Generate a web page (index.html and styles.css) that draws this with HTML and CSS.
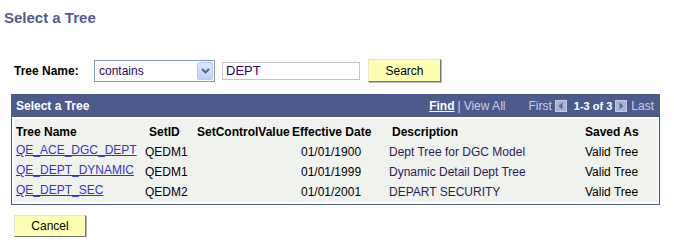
FILE: index.html
```html
<!DOCTYPE html>
<html lang="en">
<head>
<meta charset="UTF-8">
<title>Select a Tree</title>
<link rel="stylesheet" href="styles.css">
</head>
<body>
<div id="page">
	<h1 class="title">Select a Tree</h1>
	<div class="search-row">
		<label class="field-label">Tree Name:</label>
		<div class="select">
			<span class="select-text">contains</span>
			<span class="select-btn">
				<svg width="9" height="6" viewBox="0 0 9 6"><path d="M1 1 L4.5 4.5 L8 1" fill="none" stroke="#4d6185" stroke-width="1.8"/></svg>
			</span>
		</div>
		<div class="input">DEPT</div>
		<button class="btn btn-search">Search</button>
	</div>
	<div class="grid">
		<div class="grid-bar">
			<span class="grid-title">Select a Tree</span>
			<div class="grid-nav">
				<a href="#" class="find">Find</a>
				<span class="sep">|</span>
				<span class="muted">View All</span>
				<span class="muted first">First</span>
				<svg class="arrow" width="12" height="12" viewBox="0 0 12 12"><rect x="0" y="0" width="12" height="12" fill="#a7b3d3"/><rect x="0.5" y="0.5" width="11" height="11" fill="none" stroke="#c3cbe2"/><path d="M7.5 2.5 L3.5 6 L7.5 9.5 Z" fill="#5c6a99"/></svg>
				<b class="count">1-3 of 3</b>
				<svg class="arrow" width="12" height="12" viewBox="0 0 12 12"><rect x="0" y="0" width="12" height="12" fill="#a7b3d3"/><rect x="0.5" y="0.5" width="11" height="11" fill="none" stroke="#c3cbe2"/><path d="M4.5 2.5 L8.5 6 L4.5 9.5 Z" fill="#5c6a99"/></svg>
				<span class="muted last">Last</span>
			</div>
		</div>
		<div class="grid-body">
			<table class="tree-table">
				<colgroup>
					<col style="width: 129px">
					<col style="width: 51px">
					<col style="width: 93px">
					<col style="width: 86px">
					<col style="width: 207px">
					<col>
				</colgroup>
				<tr>
					<th class="c-name">Tree Name</th>
					<th class="c-setid-h">SetID</th>
					<th class="c-scv">SetControlValue</th>
					<th class="c-date-h">Effective Date</th>
					<th class="c-desc-h">Description</th>
					<th class="c-saved">Saved As</th>
				</tr>
				<tr>
					<td class="c-name link-cell"><a href="#">QE_ACE_DGC_DEPT</a></td>
					<td class="c-setid">QEDM1</td>
					<td></td>
					<td class="c-date">01/01/1900</td>
					<td class="c-desc">Dept Tree for DGC Model</td>
					<td class="c-saved">Valid Tree</td>
				</tr>
				<tr>
					<td class="c-name link-cell"><a href="#">QE_DEPT_DYNAMIC</a></td>
					<td class="c-setid">QEDM1</td>
					<td></td>
					<td class="c-date">01/01/1999</td>
					<td class="c-desc">Dynamic Detail Dept Tree</td>
					<td class="c-saved">Valid Tree</td>
				</tr>
				<tr>
					<td class="c-name link-cell"><a href="#">QE_DEPT_SEC</a></td>
					<td class="c-setid">QEDM2</td>
					<td></td>
					<td class="c-date">01/01/2001</td>
					<td class="c-desc">DEPART SECURITY</td>
					<td class="c-saved">Valid Tree</td>
				</tr>
			</table>
		</div>
	</div>
	<button class="btn btn-cancel">Cancel</button>
</div>
</body>
</html>
```

FILE: styles.css
```css
body {
	margin: 0;
	background: #fff;
	font: 12px/14px "Liberation Sans", Arial, sans-serif;
	color: #000;
}
#page {
	padding-top: 9px;
}
.title {
	margin: 0 0 0 4px;
	font: bold 15px/18px "Liberation Sans", Arial, sans-serif;
	color: #515c8f;
}
.search-row {
	display: flex;
	align-items: center;
	height: 23px;
	margin-top: 32px;
	padding-left: 14px;
}
.field-label {
	font-weight: bold;
	width: 80px;
}
.select {
	display: flex;
	align-items: center;
	justify-content: space-between;
	box-sizing: border-box;
	width: 121px;
	height: 22px;
	border: 1px solid #7f9db9;
	padding: 1px 1px 1px 4px;
	color: #330066;
}
.select-btn {
	display: flex;
	align-items: center;
	justify-content: center;
	width: 16px;
	height: 18px;
	box-sizing: border-box;
	border: 1px solid #b9c9ef;
	border-radius: 2px;
	background: linear-gradient(#dfe8fd, #bccdf6);
}
.input {
	box-sizing: border-box;
	width: 138px;
	height: 18px;
	margin-left: 7px;
	padding: 1px 3px;
	border: 1px solid #c5c5c5;
	color: #330066;
	font-size: 13px;
}
.btn {
	box-sizing: border-box;
	height: 23px;
	padding: 0;
	border: 1px solid;
	border-color: #e6e6c8 #777 #777 #e6e6c8;
	box-shadow: 1px 1px 0 #b5b5b5;
	background: #ffffb3;
	font: 12px/14px "Liberation Sans", Arial, sans-serif;
	color: #000;
}
.btn-search {
	width: 73px;
	margin-left: 8px;
}
.grid {
	box-sizing: border-box;
	width: 649px;
	margin: 12px 0 0 11px;
	border: 1px solid #4d5b8c;
}
.grid-bar {
	display: flex;
	align-items: center;
	justify-content: space-between;
	height: 22px;
	padding: 0 5px 0 4px;
	background: #4d5b8c;
	color: #fff;
}
.grid-title {
	font-weight: bold;
}
.grid-nav {
	display: flex;
	align-items: center;
}
.grid-nav .find {
	color: #fff;
	font-weight: bold;
	text-decoration: underline;
}
.grid-nav .sep {
	margin: 0 3px;
	color: #c9cde0;
}
.grid-nav .muted {
	color: #c9cde0;
}
.grid-nav .first {
	margin: 0 3px 0 23px;
}
.grid-nav .count {
	margin: 0 3px 0 7px;
	font-size: 11px;
}
.grid-nav .last {
	margin-left: 4px;
}
.grid-body {
	padding: 2px;
}
.tree-table {
	width: 100%;
	table-layout: fixed;
	border-collapse: collapse;
	background: #f0f2ed;
}
.tree-table th {
	padding: 6px 0 3px;
	text-align: left;
	font-weight: bold;
	white-space: nowrap;
}
.tree-table td {
	height: 20px;
	padding: 0;
	white-space: nowrap;
	vertical-align: middle;
}
.tree-table .link-cell {
	vertical-align: top;
	padding-top: 1px;
	height: 19px;
}
.tree-table a {
	color: #3434c8;
}
.c-name {
	padding-left: 2px !important;
}
.c-setid-h {
	padding-left: 6px !important;
}
.c-setid {
	padding-left: 2px !important;
}
.c-scv {
	padding-left: 3px !important;
}
.c-date-h {
	padding-left: 5px !important;
}
.c-date {
	padding-left: 14px !important;
}
.c-desc-h {
	padding-left: 19px !important;
}
.c-desc {
	padding-left: 16px !important;
	color: #2e1a5c;
}
.c-saved {
	padding-left: 5px !important;
}
.btn-cancel {
	display: block;
	width: 72px;
	height: 22px;
	margin: 10px 0 0 14px;
}
```
